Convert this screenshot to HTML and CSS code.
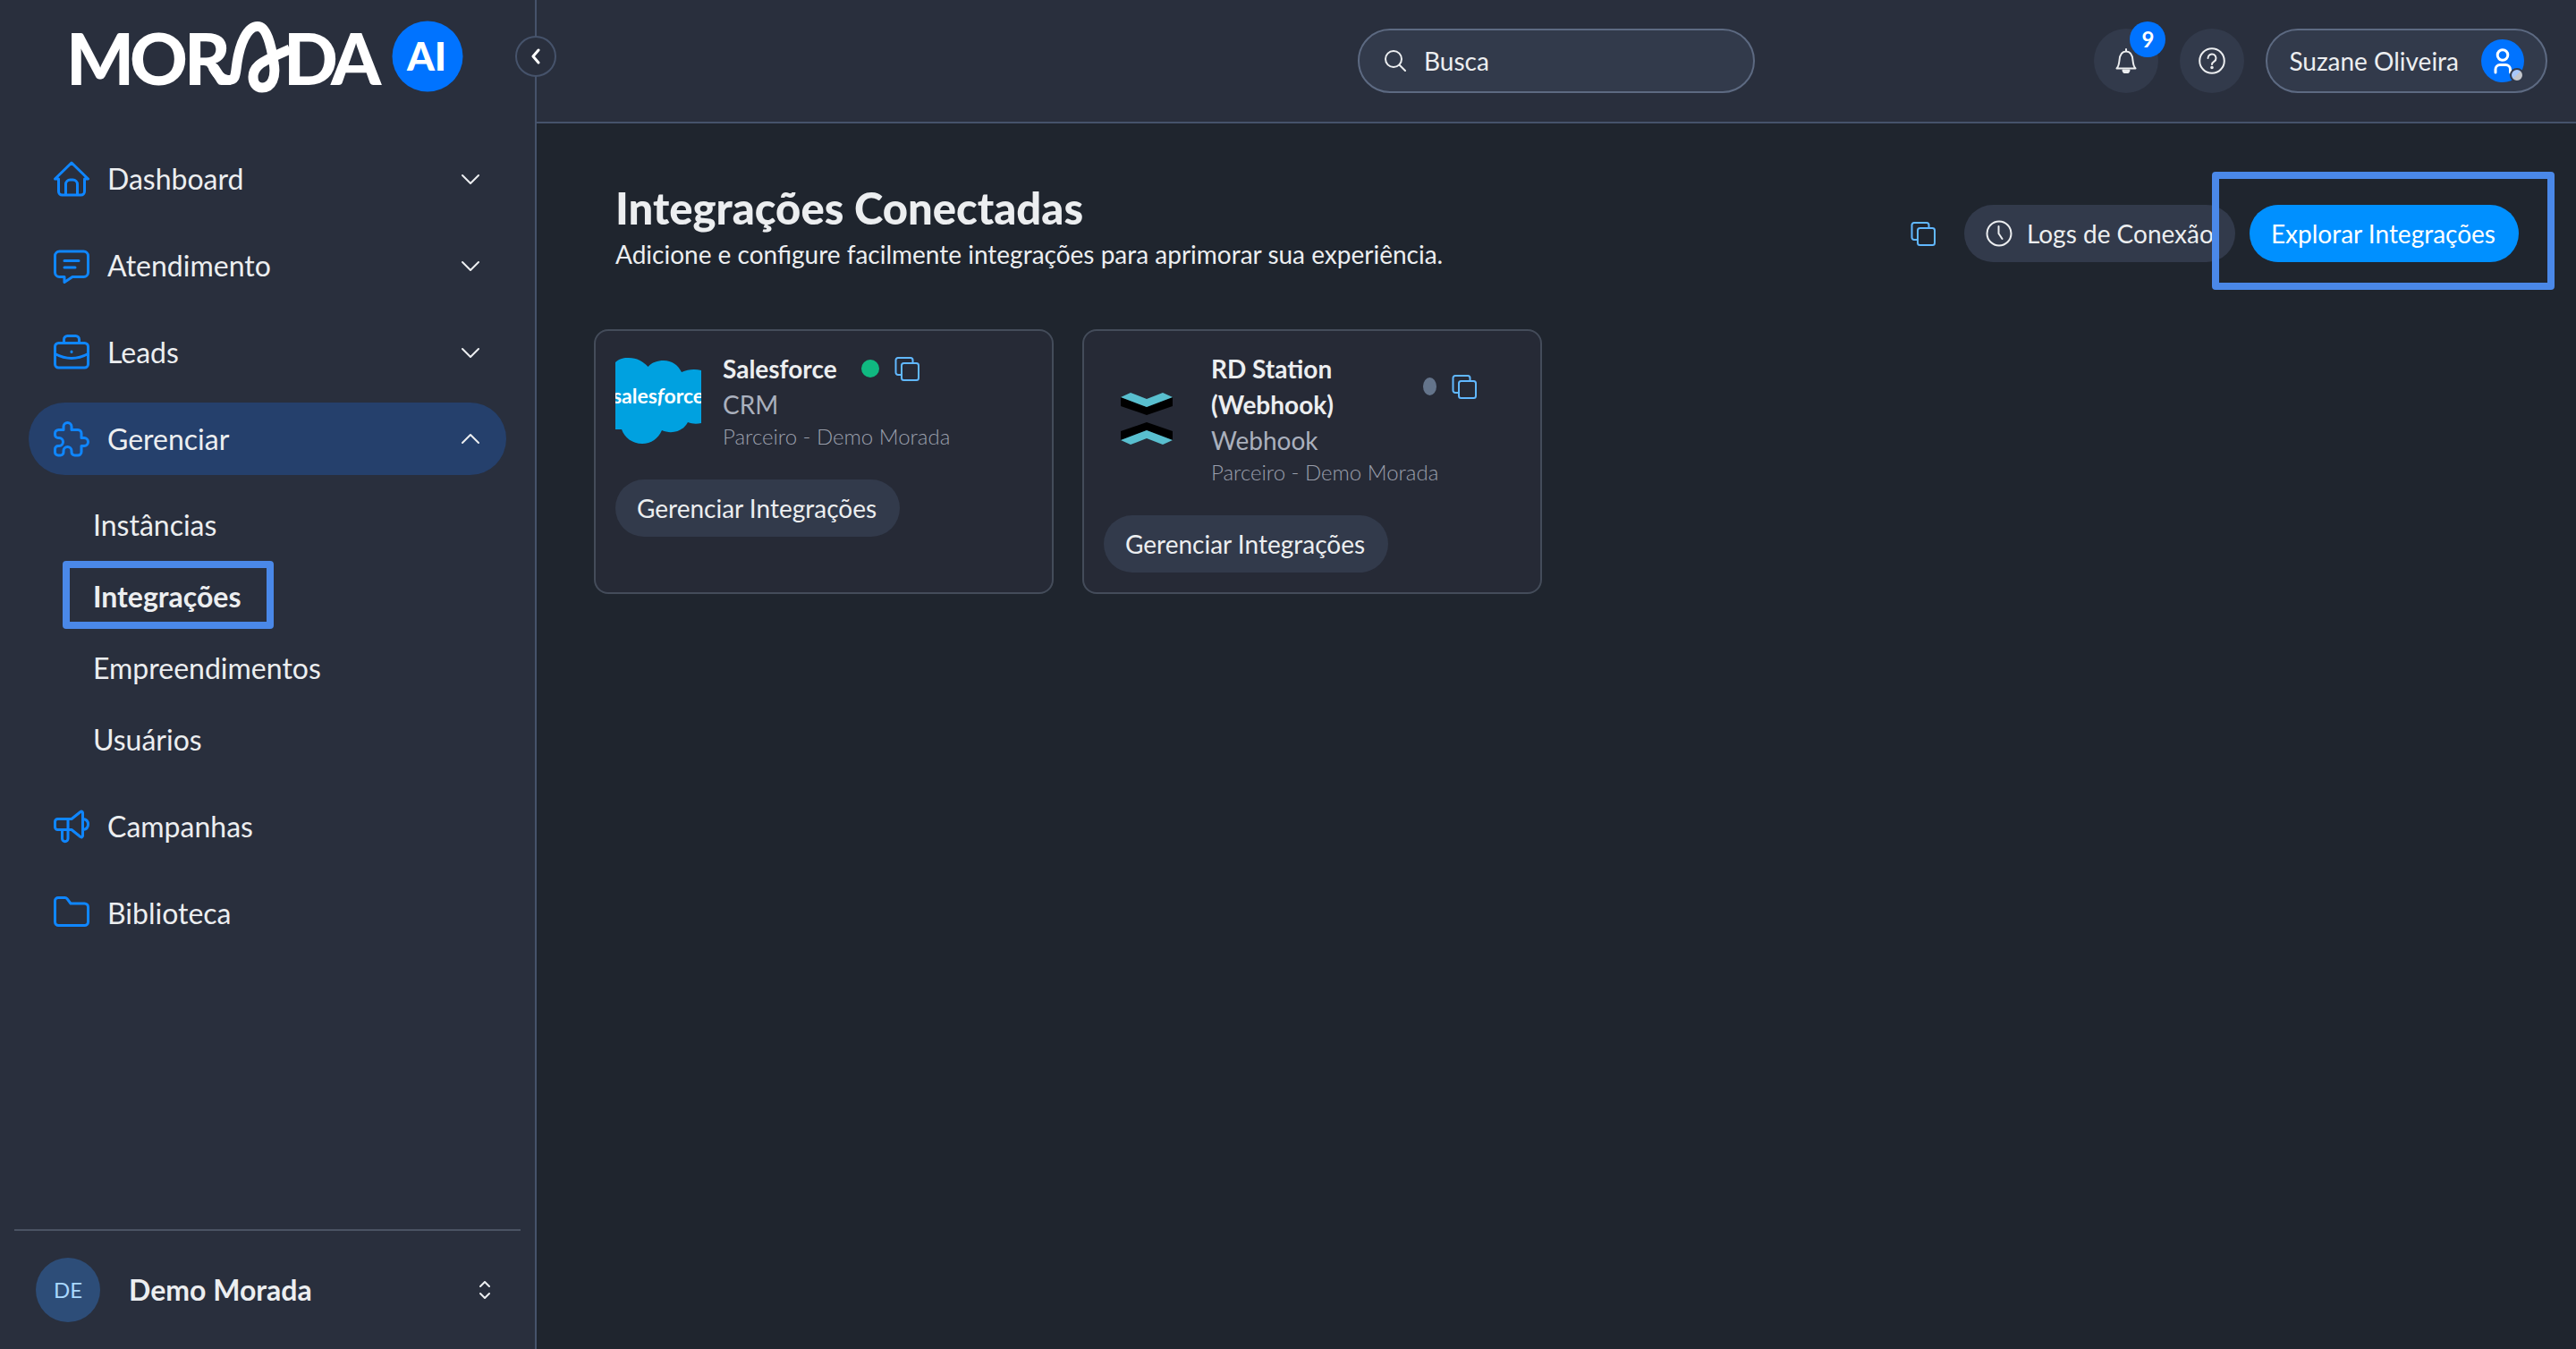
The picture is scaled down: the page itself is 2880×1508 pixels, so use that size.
FILE: index.html
```html
<!DOCTYPE html>
<html lang="pt-BR">
<head>
<meta charset="utf-8">
<title>Morada AI - Integrações</title>
<meta name="viewport" content="width=device-width, initial-scale=1">
<link rel="stylesheet" href="styles.css">
</head>
<body>
<svg class="sprite" aria-hidden="true">
  <symbol id="chevron-down" viewBox="0 0 20 20"><path d="M1 6l9 9 9-9"/></symbol>
  <symbol id="chevron-up" viewBox="0 0 20 20"><path d="M1 14l9-9 9 9"/></symbol>
  <symbol id="copy" viewBox="0 0 28 28"><path d="M7 21H4a2.500 2.500 0 0 1-2.500-2.500v-14A2.500 2.500 0 0 1 4 2h14a2.500 2.500 0 0 1 2.500 2.500V7"/><rect x="8" y="8" width="19" height="19" rx="2.500"/></symbol>
</svg>
<div class="app">
  <aside class="sidebar">
    <a class="logo" href="#" aria-label="Morada AI">
      <svg viewBox="-20 -20 480 120" width="480" height="120">
        <g class="logo-word">
          <text y="71" x="-6 65 126">MOR</text><text y="71" x="237 290">DA</text>
        </g>
        <path class="logo-ribbon" d="M158 51C163 60 168 65.500 175 65.500C184 65.500 183 60 185 46C188 26 196 5.500 208 5.500C218 5.500 223 26 226 46C229 62 224 74 213 74C206 74 203 68 203 62C203 50 214 45 224 40L244 31"/>
        <circle class="logo-disc" cx="398" cy="39" r="39.500"/>
        <text class="logo-ai" x="397" y="55">AI</text>
      </svg>
    </a>
    <button class="collapse" aria-label="Recolher menu"><svg viewBox="0 0 10 18" width="10" height="18"><path d="M8 2L2 9l6 7"/></svg></button>

    <nav class="nav">
      <a class="nav-item" href="#">
        <svg class="nav-icon" viewBox="0 0 40 40"><path d="M5.500 20h-4L20 2l18.500 18h-4M5.500 20v14a4 4 0 0 0 4 4h21a4 4 0 0 0 4-4V20M13.500 38V26a5 5 0 0 1 5-5h3a5 5 0 0 1 5 5v12"/></svg>
        <span>Dashboard</span><svg class="chevron"><use href="#chevron-down"/></svg>
      </a>
      <a class="nav-item" href="#">
        <svg class="nav-icon" viewBox="0 0 40 40"><path d="M6.500 4h27a5 5 0 0 1 5 5v18.500a5 5 0 0 1-5 5H21l-9 6v-6H6.500a5 5 0 0 1-5-5V9a5 5 0 0 1 5-5zM12 14.500h16M12 22h12"/></svg>
        <span>Atendimento</span><svg class="chevron"><use href="#chevron-down"/></svg>
      </a>
      <a class="nav-item" href="#">
        <svg class="nav-icon" viewBox="0 0 40 40"><rect x="1.500" y="9.500" width="37" height="27.500" rx="4"/><path d="M11.500 9.500V5.500a4 4 0 0 1 4-4h9a4 4 0 0 1 4 4v4M1.500 21.500q18.500 10 37 0M20 19v.5"/></svg>
        <span>Leads</span><svg class="chevron"><use href="#chevron-down"/></svg>
      </a>
      <a class="nav-item is-open" href="#">
        <svg class="nav-icon" viewBox="0 0 40 40"><path d="M1.500 13.500a4 4 0 0 1 4-4H11V6a4.500 4.500 0 0 1 9 0v3.500h7a4 4 0 0 1 4 4v5h3a4.500 4.500 0 0 1 0 9h-3V34a4 4 0 0 1-4 4h-3.500a3.500 3.500 0 0 1-3.500-3.500V33a4.500 4.500 0 0 0-9 0v1.500A3.500 3.500 0 0 1 7.500 38H5a3.500 3.500 0 0 1-3.500-3.500V31A3.500 3.500 0 0 1 5 27.500h1a4.500 4.500 0 0 0 0-9H5a3.500 3.500 0 0 1-3.500-3.500z"/></svg>
        <span>Gerenciar</span><svg class="chevron"><use href="#chevron-up"/></svg>
      </a>
      <div class="subnav">
        <a href="#">Instâncias</a>
        <a class="is-current" href="#">Integrações</a>
        <a href="#">Empreendimentos</a>
        <a href="#">Usuários</a>
      </div>
      <a class="nav-item" href="#">
        <svg class="nav-icon" viewBox="0 0 40 40"><path d="M16 11.500H4.500a3 3 0 0 0-3 3v6a3 3 0 0 0 3 3H16zM16 11.500h4L30 3.500a1.500 1.500 0 0 1 2.500 1v26a1.500 1.500 0 0 1-2.500 1l-10-8h-4M9.500 23.500v10a3.200 3.200 0 0 0 6.500 0v-10M33 11.500c3.500.5 5.500 3 5.500 6s-2 5.500-5.500 6"/></svg>
        <span>Campanhas</span>
      </a>
      <a class="nav-item" href="#">
        <svg class="nav-icon" viewBox="0 0 40 40"><path d="M5 2.500h7.500a3 3 0 0 1 2.500 1.200L19 9h15.500a4 4 0 0 1 4 4v16.500a4 4 0 0 1-4 4h-29a4 4 0 0 1-4-4V6A3.500 3.500 0 0 1 5 2.500z"/></svg>
        <span>Biblioteca</span>
      </a>
    </nav>

    <button class="account">
      <span class="account-avatar">DE</span>
      <span class="account-name">Demo Morada</span>
      <svg viewBox="0 0 12 20" width="12" height="20"><path d="M1 6l5-5 5 5M1 14l5 5 5-5"/></svg>
    </button>
  </aside>

  <header class="topbar">
    <label class="search">
      <svg viewBox="0 0 24 24" width="24" height="24"><circle cx="10" cy="10" r="9"/><path d="M16.500 16.500L23 23"/></svg>
      <input type="search" placeholder="Busca" aria-label="Busca">
    </label>
    <div class="tools">
      <button class="round" aria-label="Notificações">
        <svg viewBox="0 0 24 28" width="24" height="28"><path d="M1.500 22.500h21c-2-2-2.500-4-3-9C19 7 16.500 3.500 12 3.500S5 7 4.500 13.500c-.5 5-1 7-3 9zM12 3.500V1"/><path class="solid" d="M8.500 24.500h7a3.500 3 0 0 1-7 0z"/></svg>
        <span class="badge">9</span>
      </button>
      <button class="round" aria-label="Ajuda">
        <svg viewBox="0 0 30 30" width="30" height="30"><circle cx="15" cy="15" r="13.800"/><path d="M10.500 12a4.500 4.500 0 1 1 7 3.700c-1.500 1-2.500 1.800-2.500 3.300"/><circle class="solid" cx="15" cy="22.500" r="0.800"/></svg>
      </button>
      <button class="user">
        <span>Suzane Oliveira</span>
        <span class="user-avatar">
          <svg viewBox="0 0 48 48" width="48" height="48"><circle cx="24" cy="17.500" r="5.800"/><path d="M16 37v-3.500a5 5 0 0 1 5-5h6.500a5 5 0 0 1 5 5V37"/></svg>
          <span class="presence"></span>
        </span>
      </button>
    </div>
  </header>

  <main class="content">
    <section class="page-head">
      <div class="page-title">
        <h1>Integrações Conectadas</h1>
        <p>Adicione e configure facilmente integrações para aprimorar sua experiência.</p>
      </div>
      <div class="actions">
        <button class="copy" aria-label="Copiar"><svg><use href="#copy"/></svg></button>
        <button class="pill has-icon"><svg viewBox="0 0 30 30" width="30" height="30"><circle cx="15" cy="15" r="13.500"/><path d="M14.500 7v8l4 6"/></svg>Logs de Conexão</button>
        <div class="spotlight"><button class="pill is-primary">Explorar Integrações</button></div>
      </div>
    </section>

    <section class="cards">
      <article class="card">
        <div class="card-top">
          <svg class="card-logo" viewBox="0 0 96 96"><path fill="#00a1e0" d="M0 5C6 0 10 0 15 0c9 0 16 4 21.500 10C41 5 47 3 54 3c9 0 16 5 20 13 7-3 14-4 22-2v59c-5 1-10 1-15-1-5 10-18 14-29 9-4 9-12 15-22 15-11 0-20-7-23-16H0z"/><text class="sf-text" x="48" y="51">sales<tspan class="sf-f">f</tspan>orce</text></svg>
          <div class="card-info">
            <div class="card-name"><h2>Salesforce</h2><span class="dot is-on"></span><button class="copy" aria-label="Copiar"><svg><use href="#copy"/></svg></button></div>
            <p class="kind">CRM</p>
            <p class="owner">Parceiro - Demo Morada</p>
          </div>
        </div>
        <button class="pill">Gerenciar Integrações</button>
      </article>
      <article class="card">
        <div class="card-top">
          <svg class="card-logo" viewBox="0 0 96 96"><path d="M19 24l29 11 29-11v10L48 44 19 34zM19 62l29-10 29 10v10L48 61 19 72z"/><path fill="#59bfcf" d="M19 24l11-5 18 7 18-7 11 5-29 11zM19 72l29-11 29 11-11 5-18-7-18 7z"/></svg>
          <div class="card-info">
            <div class="card-name"><h2>RD Station (Webhook)</h2><span class="dot"></span><button class="copy" aria-label="Copiar"><svg><use href="#copy"/></svg></button></div>
            <p class="kind">Webhook</p>
            <p class="owner">Parceiro - Demo Morada</p>
          </div>
        </div>
        <button class="pill">Gerenciar Integrações</button>
      </article>
    </section>
  </main>
</div>
</body>
</html>
```
FILE: styles.css
```css
:root {
  --page: #1f252e;
  --panel: #292f3d;
  --raised: #323a4b;
  --line: #46536b;
  --text: #eceef0;
  --blue: #0f86ff;
  --highlight: #4a88e8;
}

* { box-sizing: border-box; }

body {
  margin: 0;
  background: var(--page);
  color: var(--text);
  font-family: Lato, "Liberation Sans", sans-serif;
  font-size: 28px;
  line-height: 40px;
}

h1, h2, p { margin: 0; }
a { color: inherit; text-decoration: none; }
button { font: inherit; color: inherit; border: 0; padding: 0; background: none; cursor: pointer; }
svg { display: block; flex: none; fill: none; stroke: currentColor; stroke-width: 2; stroke-linecap: round; stroke-linejoin: round; }
svg text { stroke: none; fill: #fff; }
.solid { fill: currentColor; }
.sprite { position: absolute; width: 0; height: 0; }

.app {
  display: grid;
  grid-template-columns: 600px minmax(0, 1fr);
  grid-template-rows: auto 1fr;
  min-height: 100vh;
}

/* Sidebar */
.sidebar {
  position: relative;
  grid-row: 1 / 3;
  display: flex;
  flex-direction: column;
  background: var(--panel);
  border-right: 2px solid var(--line);
}
.logo { padding: 4px 0 35px 60px; font-weight: 900; }
.logo-word { font-size: 80px; }
.logo-ribbon { stroke: #fff; stroke-width: 11; stroke-linecap: butt; }
.logo-disc { fill: #0073ff; stroke: none; }
.logo-ai { font-size: 44px; text-anchor: middle; }
.collapse {
  position: absolute;
  top: 40px;
  right: -24px;
  z-index: 1;
  display: grid;
  place-items: center;
  width: 46px;
  height: 46px;
  border: 2px solid var(--line);
  border-radius: 50%;
  background: var(--panel);
}
.collapse svg { stroke: #fff; stroke-width: 3; }

.nav { display: flex; flex-direction: column; gap: 16px; flex: 1; padding: 0 32px; }
.nav-item {
  display: flex;
  align-items: center;
  gap: 20px;
  height: 81px;
  padding: 0 28px;
  border-radius: 41px;
  font-size: 32px;
}
.nav-item.is-open { background: #25406c; }
.nav-icon { width: 40px; height: 40px; color: var(--blue); stroke-width: 3; }
.chevron { width: 20px; height: 20px; margin-left: auto; margin-right: 2px; }
.subnav { display: flex; flex-direction: column; padding-left: 72px; font-size: 32px; }
.subnav a { align-self: flex-start; padding: 20px 0; }
.subnav .is-current { position: relative; font-weight: 700; }
.subnav .is-current::after {
  content: "";
  position: absolute;
  inset: 0 -36px 4px -34px;
  border: 8px solid var(--highlight);
  border-radius: 4px;
}

.account {
  display: flex;
  align-items: center;
  gap: 32px;
  margin: 0 16px;
  padding: 30px 34px 30px 24px;
  border-top: 2px solid #4a5363;
}
.account-avatar {
  display: grid;
  place-items: center;
  width: 72px;
  height: 72px;
  border-radius: 50%;
  background: #2d4d78;
  color: #a9d8ff;
  font-size: 24px;
}
.account-name { font-size: 32px; font-weight: 700; }
.account svg { margin-left: auto; }

/* Top bar */
.topbar {
  display: grid;
  grid-template-columns: 1fr auto 1fr;
  align-items: center;
  padding: 32px;
  background: var(--panel);
  border-bottom: 2px solid var(--line);
}
.search {
  grid-column: 2;
  display: flex;
  align-items: center;
  gap: 20px;
  width: 444px;
  height: 72px;
  padding: 0 28px;
  border: 2px solid #5d6a82;
  border-radius: 36px;
  background: var(--raised);
}
.search input { flex: 1; min-width: 0; padding: 0; border: 0; outline: 0; background: none; color: inherit; font: inherit; }
.search input::placeholder { color: var(--text); opacity: 1; }
.tools { display: flex; justify-content: flex-end; gap: 24px; }
.round {
  position: relative;
  display: grid;
  place-items: center;
  width: 72px;
  height: 72px;
  border-radius: 50%;
  background: var(--raised);
}
.badge {
  position: absolute;
  top: -8px;
  right: -8px;
  width: 40px;
  height: 40px;
  border-radius: 50%;
  background: #0073ff;
  color: #fff;
  font-size: 24px;
  font-weight: 700;
}
.user {
  display: flex;
  align-items: center;
  gap: 25px;
  height: 72px;
  padding: 0 24px;
  border: 2px solid #5d6a82;
  border-radius: 36px;
  background: var(--raised);
}
.user-avatar { position: relative; border-radius: 50%; background: #0073ff; }
.user-avatar svg { stroke: #fff; stroke-width: 3; }
.presence {
  position: absolute;
  right: 0;
  bottom: 0;
  width: 16px;
  height: 16px;
  border: 2px solid #323a4b;
  border-radius: 50%;
  background: linear-gradient(135deg, #a9c8fa 50%, #c4c6cb 50%);
}

/* Content */
.content { padding: 64px; }
.page-head {
  display: flex;
  align-items: center;
  justify-content: space-between;
  margin-bottom: 48px;
  padding-left: 24px;
}
.page-title { padding-bottom: 14px; }
.page-title h1 { font-size: 49px; font-weight: 900; line-height: 60px; }
.page-title p { line-height: 44px; }
.actions { display: flex; align-items: center; gap: 16px; }
.pill {
  height: 64px;
  padding: 0 26px 0 24px;
  border-radius: 32px;
  background: var(--raised);
  white-space: nowrap;
}
.pill.has-icon { display: flex; align-items: center; gap: 16px; padding-right: 24px; }
.pill.is-primary { background: #0090ff; color: #fff; }
.actions > .copy { margin-right: 16px; }
.spotlight { position: relative; }
.spotlight::after {
  content: "";
  position: absolute;
  inset: -37px -40px -31px -42px;
  border: 8px solid var(--highlight);
  border-radius: 4px;
  pointer-events: none;
}
.copy { flex: none; color: #61b8ff; }
.copy svg { width: 28px; height: 28px; }

.cards { display: flex; flex-wrap: wrap; gap: 32px; }
.card {
  width: 514px;
  padding: 22px;
  border: 2px solid #444c5a;
  border-radius: 16px;
  background: #262a36;
}
.card-top { display: flex; align-items: center; gap: 24px; margin-bottom: 32px; }
.card-logo { width: 96px; height: 96px; overflow: hidden; stroke: none; fill: #000; }
.sf-text { font-size: 23px; font-weight: 700; text-anchor: middle; }
.sf-f { font-style: italic; }
.card-info { flex: 1; min-width: 0; }
.card-name { display: flex; align-items: center; padding-right: 49px; }
.card-name h2 { font-size: 28px; font-weight: 700; line-height: 40px; }
.dot { width: 20px; height: 20px; margin: 0 17px 0 27px; border-radius: 50%; background: #64748b; }
.dot.is-on { background: #10b981; }
.kind { color: #aab0bd; }
.owner { color: #9a9fac; font-size: 24px; font-weight: 300; line-height: 32px; }
```
